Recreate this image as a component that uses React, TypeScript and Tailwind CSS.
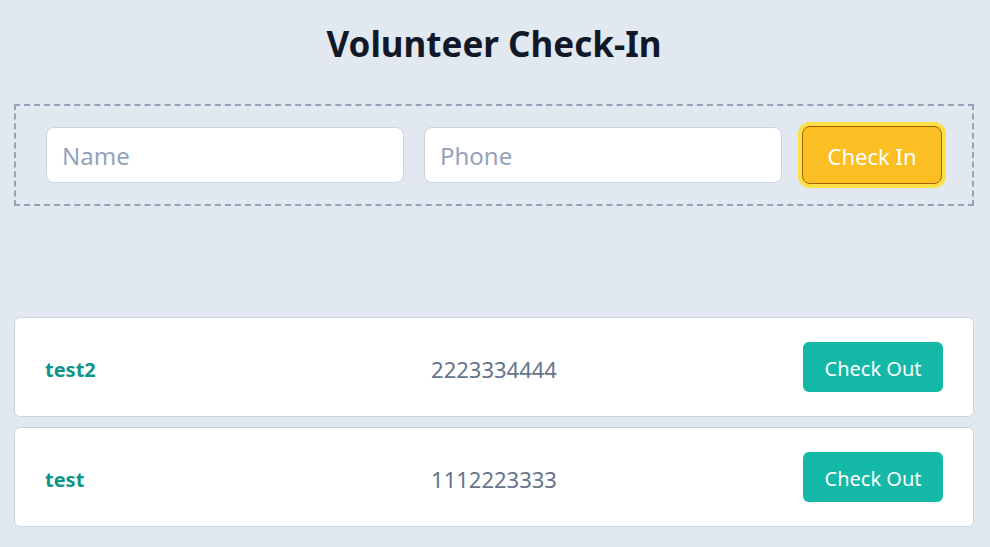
import { useState } from 'react';

const volunteers = [
  { id: 2, name: 'test2', phone: '2223334444' },
  { id: 1, name: 'test', phone: '1112223333' },
];

export default function App() {
  const [name, setName] = useState('');
  const [phone, setPhone] = useState('');

  return (
    <div className="min-h-screen bg-[#e2e8f0] pl-[14px] pr-[16px] font-['Noto_Sans',sans-serif]">
      {/* Header */}
      <h1 className="pt-[18px] pb-[34px] text-center text-[35px] font-bold leading-[52px] text-[#111827]">
        Volunteer Check-In
      </h1>

      {/* Check-in form */}
      <div className="flex items-center gap-5 border-2 border-dashed border-[#94a3b8] px-[30px] py-5">
        <input
          value={name}
          onChange={(e) => setName(e.target.value)}
          placeholder="Name"
          className="h-14 min-w-0 flex-1 rounded-lg border border-[#cbd5e1] bg-white px-[15px] text-[24px] text-slate-700 placeholder:text-[#94a3b8] outline-none"
        />
        <input
          value={phone}
          onChange={(e) => setPhone(e.target.value)}
          placeholder="Phone"
          className="h-14 min-w-0 flex-1 rounded-lg border border-[#cbd5e1] bg-white px-[15px] text-[24px] text-slate-700 placeholder:text-[#94a3b8] outline-none"
        />
        <button className="h-[58px] w-[140px] shrink-0 rounded-lg border border-[#a16207] bg-[#fbbf24] pt-[2px] text-[22px] text-white ring-4 ring-[#fde047]">
          Check In
        </button>
      </div>

      {/* Checked-in list */}
      <div className="mt-[111px] flex flex-col gap-[10px]">
        {volunteers.map((v) => (
          <div
            key={v.id}
            className="grid grid-cols-3 items-center rounded-md border border-[#cbd5e1] bg-white px-[30px] py-6"
          >
            <span className="pt-[5px] text-[20px] font-bold text-[#0d9488]">{v.name}</span>
            <span className="pt-[4px] text-center text-[22px] text-[#64748b]">{v.phone}</span>
            <button className="h-[50px] w-[140px] justify-self-end rounded-md bg-[#14b8a6] pt-[3px] text-[20px] text-white">
              Check Out
            </button>
          </div>
        ))}
      </div>
    </div>
  );
}
